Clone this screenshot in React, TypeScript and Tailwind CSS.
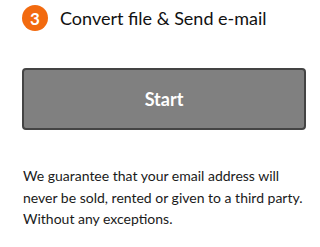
export default function App() {
  return (
    <div className="w-[320px] h-[247px] bg-white font-['Lato',sans-serif] text-[#1a1a1a]">
      <div className="flex items-center gap-[12px] pl-[22px] pt-[5px]">
        <span className="flex h-[26px] w-[26px] items-center justify-center rounded-full bg-[#f26a0f] text-[17px] font-bold leading-none text-white">
          3
        </span>
        <h2 className="text-[18px] leading-[26px] text-[#111]">Convert file &amp; Send e-mail</h2>
      </div>

      <div className="px-[22px] pt-[37px]">
        <button className="flex h-[62px] w-[284px] items-center justify-center rounded-[4px] border-2 border-[#444] bg-[#808080] text-[18px] font-bold text-white">
          Start
        </button>
      </div>

      <p className="pl-[23px] pr-[8px] pt-[35px] text-[14px] leading-[21.5px] text-[#1a1a1a]">
        We guarantee that your email address will never be sold, rented or given to a third party. Without any exceptions.
      </p>
    </div>
  );
}
